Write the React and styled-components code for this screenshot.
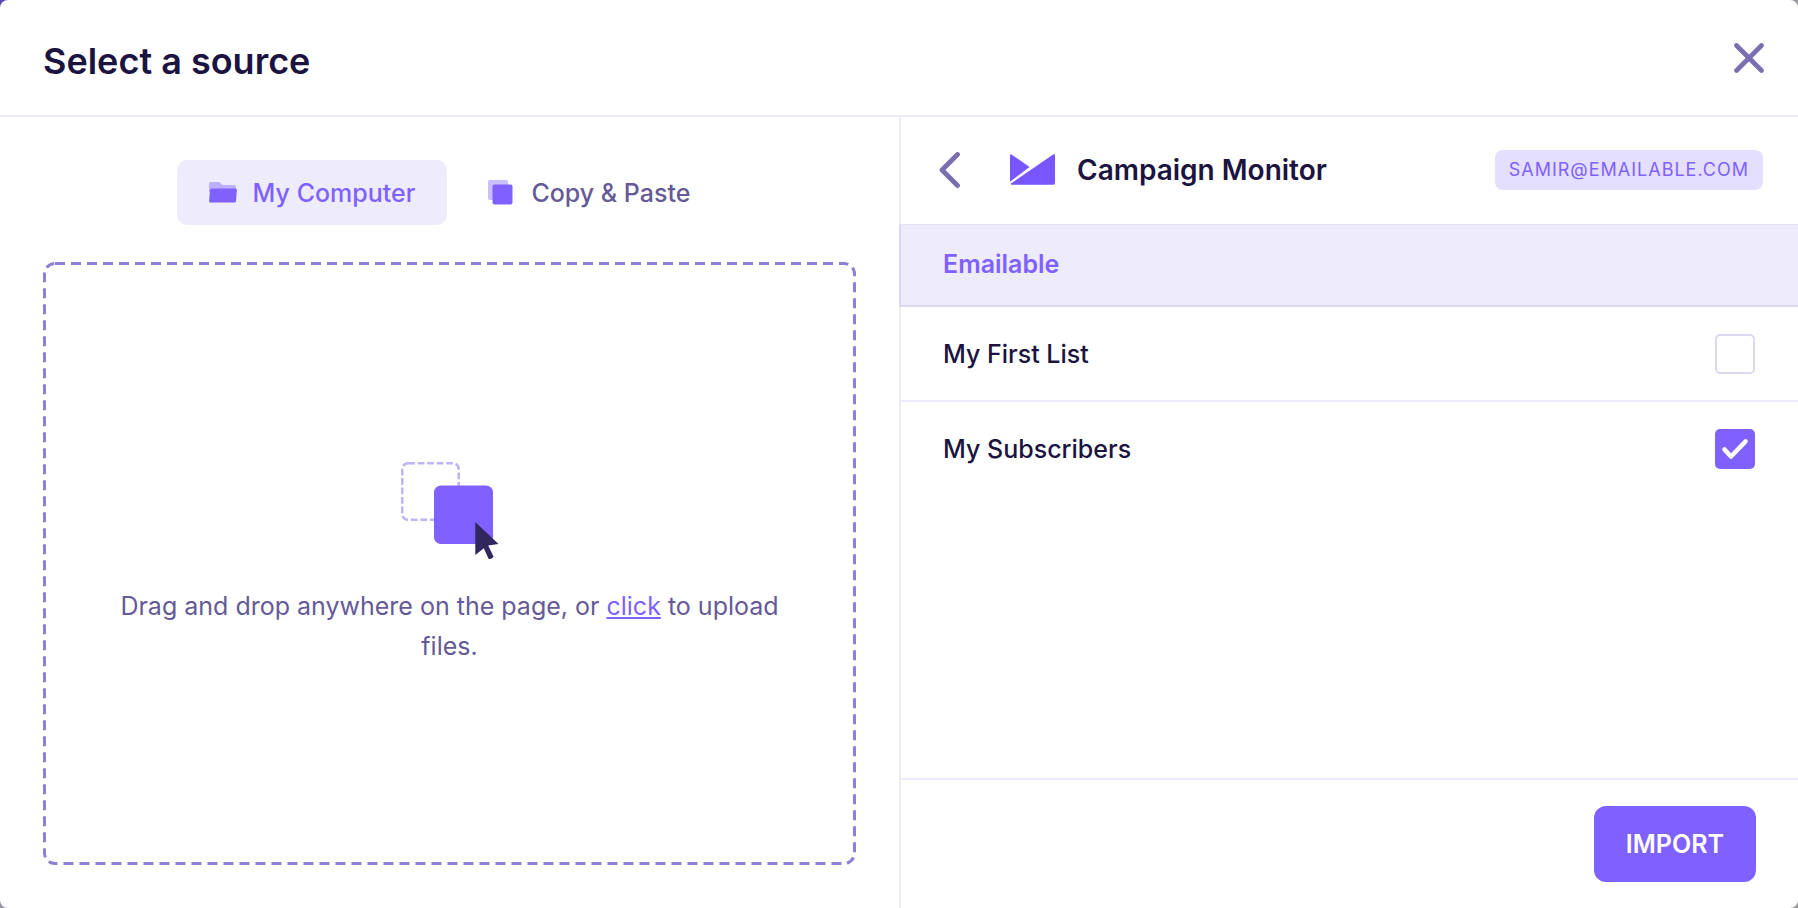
import React, { useState } from "react";
import styled, { createGlobalStyle } from "styled-components";

const svgUrl = (svg) => `url("data:image/svg+xml,${encodeURIComponent(svg)}")`;

const dashedBorder = svgUrl(
  `<svg xmlns="http://www.w3.org/2000/svg" width="100%" height="100%"><rect width="100%" height="100%" rx="12" fill="none" stroke="#8f80d6" stroke-width="6" stroke-dasharray="10 6"/></svg>`
);

const checkMark = svgUrl(
  `<svg xmlns="http://www.w3.org/2000/svg" viewBox="0 0 40 40"><path d="M9.5 20.5L16 27.5L30.5 12.5" fill="none" stroke="#fff" stroke-width="4.6" stroke-linecap="round" stroke-linejoin="round"/></svg>`
);

function App() {
  const [tab, setTab] = useState("computer");
  const [lists, setLists] = useState([
    { name: "My First List", checked: false },
    { name: "My Subscribers", checked: true },
  ]);

  const toggleList = (name) => {
    setLists(
      lists.map((list) =>
        list.name === name ? { ...list, checked: !list.checked } : list
      )
    );
  };

  return (
    <>
      <GlobalStyle />
      <Modal>
        <Header>
          <Title>Select a source</Title>
          <IconButton aria-label="Close">
            <CloseIcon />
          </IconButton>
        </Header>

        <Content>
          <UploadPane>
            <Tabs>
              <Tab
                $active={tab === "computer"}
                onClick={() => setTab("computer")}
              >
                <FolderIcon />
                My Computer
              </Tab>
              <Tab $active={tab === "paste"} onClick={() => setTab("paste")}>
                <CopyIcon />
                Copy &amp; Paste
              </Tab>
            </Tabs>
            <DropZone>
              <DragIcon />
              <DropText>
                Drag and drop anywhere on the page, or{" "}
                <DropLink href="#upload">click</DropLink> to upload files.
              </DropText>
            </DropZone>
          </UploadPane>

          <SourcePane>
            <SourceHeader>
              <IconButton aria-label="Back">
                <BackIcon />
              </IconButton>
              <CampaignMonitorLogo />
              <SourceName>Campaign Monitor</SourceName>
              <Account>samir@emailable.com</Account>
            </SourceHeader>
            <GroupName>Emailable</GroupName>
            <Lists>
              {lists.map((list) => (
                <ListRow key={list.name}>
                  {list.name}
                  <Checkbox
                    type="checkbox"
                    checked={list.checked}
                    onChange={() => toggleList(list.name)}
                  />
                </ListRow>
              ))}
            </Lists>
            <Footer>
              <ImportButton>Import</ImportButton>
            </Footer>
          </SourcePane>
        </Content>
      </Modal>
    </>
  );
}

export default App;

const CloseIcon = () => (
  <svg width="30" height="30" viewBox="0 0 30 30">
    <path
      d="M2.5 2.5L27.5 27.5M27.5 2.5L2.5 27.5"
      stroke="#7a6db0"
      strokeWidth="4.6"
      strokeLinecap="round"
    />
  </svg>
);

const BackIcon = () => (
  <svg width="22" height="36" viewBox="0 0 22 36">
    <path
      d="M18.5 2.5L3 18L18.5 33.5"
      fill="none"
      stroke="#7a6db0"
      strokeWidth="4.8"
      strokeLinecap="round"
      strokeLinejoin="round"
    />
  </svg>
);

const FolderIcon = () => (
  <svg width="28" height="21" viewBox="0 0 28 21">
    <path
      d="M0 1.5Q0 0 1.5 0H10.5L13.5 3H25Q27 3 27 5V10H0Z"
      fill="#bdafff"
    />
    <path
      d="M3 6.5H26.5Q28 6.5 27.9 8L27 19Q26.8 20.5 25.3 20.5H1.5Q0 20.5 .1 19L1 8.3Q1.2 6.5 3 6.5Z"
      fill="#7f61ff"
    />
  </svg>
);

const CopyIcon = () => (
  <svg width="28" height="26" viewBox="-1 0 28 26">
    <rect width="20" height="20" rx="2" fill="#cbbfff" />
    <rect x="4.5" y="4.5" width="20" height="20" rx="2" fill="#7f61ff" />
  </svg>
);

const DragIcon = () => (
  <svg width="98" height="98" viewBox="0 0 98 98">
    <rect
      x="1.2"
      y="1.2"
      width="56.5"
      height="56.5"
      rx="6"
      fill="none"
      stroke="#c0b2fb"
      strokeWidth="2.6"
      strokeDasharray="6.7 2.8"
    />
    <rect x="33" y="23.5" width="59" height="58.5" rx="7" fill="#7f61ff" />
    <path
      d="M74.3 60L97.5 82L87.2 83.4L92.6 94.8Q90.5 97.5 87.7 97L82.8 86.2L74.3 93Z"
      fill="#32265f"
    />
  </svg>
);

const CampaignMonitorLogo = () => (
  <svg width="45" height="31" viewBox="0 0 45 31">
    <path d="M0 .8Q.3 -.3 1.4 .4L19.5 13L0 27.8Z" fill="#7856ff" />
    <path
      d="M43.5 .3Q45 -.3 45 1.2V29Q45 30.7 43.3 30.7H2Q.8 30.7 .5 29.8Z"
      fill="#7856ff"
    />
  </svg>
);

const GlobalStyle = createGlobalStyle`
  * {
    box-sizing: border-box;
  }
  body {
    margin: 0;
    background: linear-gradient(135deg, #5b47b8 0, #9a96ab 400px, #999 100%);
    font-family: Inter, "Liberation Sans", sans-serif;
    color: #1c1440;
  }
  button {
    font-family: inherit;
    border: none;
    cursor: pointer;
  }
  svg {
    display: block;
    flex-shrink: 0;
  }
`;

const Modal = styled.div`
  display: flex;
  flex-direction: column;
  min-height: 100vh;
  background: #fff;
  border-radius: 8px;
`;

const Header = styled.header`
  display: flex;
  align-items: center;
  justify-content: space-between;
  height: 117px;
  padding: 0 34px 0 43px;
  border-bottom: 2px solid #eeecfa;
`;

const Title = styled.h1`
  margin: 0;
  padding-top: 6px;
  font-size: 36px;
  font-weight: 600;
  line-height: 44px;
`;

const IconButton = styled.button`
  padding: 0;
  background: none;
`;

const Content = styled.main`
  flex: 1;
  display: grid;
  grid-template-columns: 1fr 1fr;
`;

const UploadPane = styled.section`
  display: flex;
  flex-direction: column;
  gap: 37px;
  padding: 43px;
`;

const Tabs = styled.div`
  display: flex;
  justify-content: center;
  gap: 8px;
`;

const Tab = styled.button`
  display: flex;
  align-items: center;
  gap: 16px;
  height: 65px;
  padding: 0 32px;
  border-radius: 10px;
  background: ${(props) => (props.$active ? "#eeecfb" : "transparent")};
  color: ${(props) => (props.$active ? "#7f61ff" : "#655a97")};
  font-size: 25px;
  font-weight: 500;
`;

const DropZone = styled.div`
  flex: 1;
  display: flex;
  flex-direction: column;
  align-items: center;
  justify-content: center;
  gap: 26px;
  padding: 0 64px;
  border-radius: 12px;
  background: ${dashedBorder};
`;

const DropText = styled.p`
  margin: 0;
  color: #655a97;
  font-size: 25px;
  line-height: 40px;
  text-align: center;
`;

const DropLink = styled.a`
  color: #7f61ff;
`;

const SourcePane = styled.section`
  display: flex;
  flex-direction: column;
  border-left: 2px solid #eeecfa;
`;

const SourceHeader = styled.div`
  display: flex;
  align-items: center;
  height: 107px;
  padding: 0 35px 2px 38px;

  ${IconButton} {
    margin-right: 49px;
  }
`;

const SourceName = styled.h2`
  flex: 1;
  margin: 0 0 0 22px;
  font-size: 28px;
  font-weight: 600;
`;

const Account = styled.span`
  padding: 0 14px;
  border-radius: 8px;
  background: #e4deff;
  color: #7f61ff;
  font-size: 18px;
  font-weight: 400;
  line-height: 40px;
  letter-spacing: 1px;
  text-transform: uppercase;
`;

const GroupName = styled.h3`
  margin: 0 0 0 -2px;
  padding: 0 42px 2px;
  border: 1px solid #dad7f3;
  border-width: 1px 0 2px 2px;
  border-top-color: #e6e3f8;
  background: #eeecfb;
  color: #7f61ff;
  font-size: 25px;
  font-weight: 600;
  line-height: 78px;
`;

const Lists = styled.div`
  flex: 1;
`;

const ListRow = styled.label`
  display: flex;
  align-items: center;
  justify-content: space-between;
  height: 95px;
  padding: 0 43px 0 42px;
  border-bottom: 2px solid #eeecfa;
  font-size: 25px;
  font-weight: 500;

  &:last-child {
    border-bottom-color: transparent;
  }
`;

const Checkbox = styled.input`
  appearance: none;
  width: 40px;
  height: 40px;
  margin: 0;
  border: 2px solid #dcd8f0;
  border-radius: 5px;
  cursor: pointer;

  &:checked {
    border: none;
    background: #7f61ff ${checkMark};
  }
`;

const Footer = styled.footer`
  display: flex;
  justify-content: flex-end;
  padding: 26px 42px;
  border-top: 2px solid #eeecfa;
`;

const ImportButton = styled.button`
  height: 76px;
  padding: 0 32px;
  border-radius: 12px;
  background: #7f61ff;
  color: #fff;
  font-size: 25px;
  font-weight: 600;
  text-transform: uppercase;
`;
